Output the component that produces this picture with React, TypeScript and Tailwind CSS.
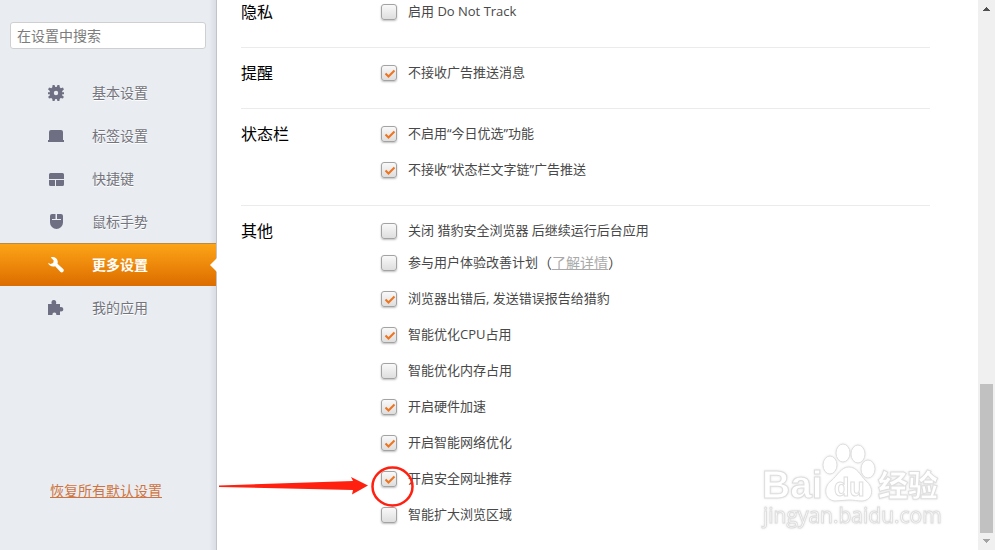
import React, { useState } from 'react';

interface OptionRow {
  id: string;
  label: string;
  checked: boolean;
  link?: string;
  tight?: boolean;
}

interface Section {
  title: string;
  rows: OptionRow[];
}

const sections: Section[] = [
  {
    title: '隐私',
    rows: [{ id: 'dnt', label: '启用 Do Not Track', checked: false }],
  },
  {
    title: '提醒',
    rows: [{ id: 'push', label: '不接收广告推送消息', checked: true }],
  },
  {
    title: '状态栏',
    rows: [
      { id: 'today', label: '不启用“今日优选”功能', checked: true },
      { id: 'textlink', label: '不接收“状态栏文字链”广告推送', checked: true },
    ],
  },
  {
    title: '其他',
    rows: [
      { id: 'background', label: '关闭 猎豹安全浏览器 后继续运行后台应用', checked: false, tight: true },
      { id: 'improve', label: '参与用户体验改善计划', checked: false, link: '了解详情' },
      { id: 'crash', label: '浏览器出错后, 发送错误报告给猎豹', checked: true },
      { id: 'cpu', label: '智能优化CPU占用', checked: true },
      { id: 'memory', label: '智能优化内存占用', checked: false },
      { id: 'hardware', label: '开启硬件加速', checked: true },
      { id: 'network', label: '开启智能网络优化', checked: true },
      { id: 'safeurl', label: '开启安全网址推荐', checked: true },
      { id: 'expand', label: '智能扩大浏览区域', checked: false },
    ],
  },
];

const icons: Record<string, React.ReactNode> = {
  gear: (
    <path
      fillRule="evenodd"
      d="M4.6 0h1.9l.8 2h1.4l.8-2h1.9l.4 2.3 1 .9L15 2.6l.9 1.8-1.7 1.5v1.3h1.8v2h-1.8v1.2l1.7 1.3-.9 1.9-2.3-.5-1 .9-.3 2H9.5l-.8-2H7.3l-.8 2H4.6l-.3-2-1-.9-2.3.5-.9-1.9 1.7-1.3V9.2H0v-2h1.8V5.9L.1 4.4 1 2.6l2.3.6 1-.9zM8 5.800a2.200 2.200 0 1 0 0 4.400 2.200 2.200 0 0 0 0-4.400z"
    />
  ),
  tab: <path d="M1 12V4a2 2 0 0 1 2-2h10a2 2 0 0 1 2 2v8h1v2H0v-2z" />,
  panels: <path d="M1 3.5A1.5 1.5 0 0 1 2.5 2h12A1.5 1.5 0 0 1 16 3.5V8H1zM1 9h6v6H2.5A1.5 1.5 0 0 1 1 13.5zM8 9h8v4.5a1.5 1.5 0 0 1-1.5 1.5H8z" />,
  mouse: <path d="M2 2a2 2 0 0 1 2-2h3.500v5H4v1h9V5H9V0h4a2 2 0 0 1 2 2v6.500a6.500 6.500 0 0 1-13 0z" />,
  wrench: <path d="M2.8.4C6-.7 9.4 1 9.7 4.500c.1.9 0 1.6-.2 2.3l5.700 5.100c1.800 1.700-.7 4.700-2.700 3.100L7.200 9.300C4.300 10.200 1 9.100 0 5.800l2.500 1.100 2.700-.8.500-2.600z" />,
  puzzle: <path d="M0 4h3.700C3 2.200 3.800 0 5.800 0s3 2.200 2.200 4h4v3.200c1.600-.7 3.300.2 3.300 2.100s-1.700 2.700-3.300 2V15H8.300c.3-1.600-.5-2.600-1.900-2.600s-2.200 1-1.900 2.600H0z" />,
};

const navItems = [
  { icon: 'gear', label: '基本设置' },
  { icon: 'tab', label: '标签设置' },
  { icon: 'panels', label: '快捷键' },
  { icon: 'mouse', label: '鼠标手势' },
  { icon: 'wrench', label: '更多设置' },
  { icon: 'puzzle', label: '我的应用' },
];

const Sidebar: React.FC = () => {
  const [active, setActive] = useState('更多设置');

  return (
    <aside className="w-[217px] shrink-0 flex flex-col border-r border-[#c0c3cb] bg-[#e9edf2] bg-[linear-gradient(to_left,#d9dde4,#e9edf2_7px)]">
      <div className="px-[10px] pt-[22px]">
        <input
          type="text"
          aria-label="在设置中搜索"
          placeholder="在设置中搜索"
          className="block w-full h-[27px] px-[6px] text-sm bg-white border border-[#cfcfcf] rounded-[3px] placeholder:text-[#7c7c7c] outline-none"
        />
      </div>

      <nav className="mt-[22px]">
        {navItems.map((item) => {
          const isActive = item.label === active;
          return (
            <button
              key={item.label}
              onClick={() => setActive(item.label)}
              className={
                isActive
                  ? 'relative w-full h-[43px] pl-12 flex items-center gap-7 text-sm font-bold text-white border-t border-[#c08a3c] bg-linear-to-b from-[#fda416] to-[#dc6c00]'
                  : 'relative w-full h-[43px] pl-12 flex items-center gap-7 text-sm text-[#74747d] [text-shadow:0_1px_0_#fff]'
              }
            >
              <svg viewBox="0 0 16 16" className={isActive ? 'w-4 h-4 fill-white' : 'w-4 h-4 fill-[#6e6f83]'}>
                {icons[item.icon]}
              </svg>
              <span>{item.label}</span>
              {isActive && (
                <svg viewBox="0 0 7 14" className="absolute -right-px top-3.5 w-[7px] h-3.5 fill-white">
                  <path d="M7 0v14L0 7z" />
                </svg>
              )}
            </button>
          );
        })}
      </nav>

      <div className="mt-auto pl-[50px] pb-12">
        <a href="#reset" className="text-sm text-[#cf7440] underline">
          恢复所有默认设置
        </a>
      </div>
    </aside>
  );
};

const Option: React.FC<{ row: OptionRow }> = ({ row }) => {
  const [checked, setChecked] = useState(row.checked);

  return (
    <div className={row.tight ? 'h-6 flex items-center -mb-1' : 'h-6 flex items-center'}>
      <span className="relative w-4 h-4 mr-[11px]">
        <input
          id={row.id}
          type="checkbox"
          checked={checked}
          onChange={() => setChecked(!checked)}
          className="peer block w-4 h-4 appearance-none rounded-[3px] border border-[#a3a3a3] bg-linear-to-b from-[#f9f9f9] to-[#dedede] shadow-[0_1px_2px_rgba(0,0,0,0.25)]"
        />
        <svg
          viewBox="0 0 16 16"
          className="absolute inset-0 w-4 h-4 hidden peer-checked:block pointer-events-none fill-none stroke-[#ee7420] stroke-2"
        >
          <path d="M4.5 8.5 7.5 11.5 13.5 5.5" />
        </svg>
      </span>
      <label htmlFor={row.id} className="text-[13px] text-[#484848]">
        {row.label}
      </label>
      {row.link && (
        <span className="text-sm text-[#484848]">
          （
          <a href="#improve" className="text-[#a9a9a9] underline">
            {row.link}
          </a>
          ）
        </span>
      )}
    </div>
  );
};

const Scrollbar: React.FC = () => (
  <div className="w-[17px] shrink-0 flex flex-col items-center bg-[#f0f0f0]">
    <svg viewBox="0 0 17 17" className="w-[17px] h-[17px] fill-[#505050]">
      <path d="M8 7h1v1h1v1h1v1h1v1H5v-1h1V9h1V8h1z" />
    </svg>
    <div className="flex-1 flex flex-col justify-end">
      <div className="w-[13px] h-[149px] bg-[#c1c1c1]" />
    </div>
    <svg viewBox="0 0 17 17" className="w-[17px] h-[17px] fill-[#a3a3a3]">
      <path d="M5 6h7v1h-1v1h-1v1H9v1H8V9H7V8H6V7H5z" />
    </svg>
  </div>
);

// red pointer drawn over the "safe url" option
const Annotation: React.FC = () => (
  <svg viewBox="0 0 196 44" className="absolute left-[219px] top-[464px] w-[196px] h-11 pointer-events-none">
    <path d="M0 21.5 134 17 132 13 149 21.500 133 30.500 134 26 0 23z" fill="#ff2010" />
    <ellipse cx="173.5" cy="22.500" rx="20" ry="19" fill="none" stroke="#ff2010" strokeWidth="2.500" />
  </svg>
);

const Watermark: React.FC = () => (
  <svg
    viewBox="0 0 184 90"
    className="absolute right-[51px] bottom-[19px] w-[184px] h-[90px] pointer-events-none fill-white stroke-[#dedede] stroke-1 [filter:drop-shadow(0_0_1px_#e4e4e4)]"
  >
    <text x="2" y="57" fontSize="39" fontWeight="700" fontFamily="Liberation Sans">
      Bai
    </text>
    <ellipse cx="70" cy="24" rx="7" ry="9" />
    <ellipse cx="83" cy="12" rx="7" ry="9" />
    <ellipse cx="98" cy="13" rx="7" ry="9" />
    <ellipse cx="108" cy="28" rx="7" ry="9" />
    <path d="M89 26c8 0 11 8 17 14 8 6 8 19-4 20-5 0-8-1-13-1s-9 1-14 1c-11-1-12-14-4-20 7-6 10-14 18-14z" />
    <text x="74" y="55" fontSize="25" fontWeight="700" fontFamily="Liberation Sans">
      du
    </text>
    <text x="118" y="55" fontSize="30" fontWeight="900" fontFamily="Noto Sans CJK SC">
      经验
    </text>
    <text x="3" y="82" fontSize="21" fontFamily="Open Sans">
      jingyan.baidu.com
    </text>
  </svg>
);

export default function App() {
  return (
    <div className="relative min-h-screen flex bg-white font-['Open_Sans','Noto_Sans_CJK_SC',sans-serif]">
      <Sidebar />

      <main className="flex-1 pl-6 pr-12">
        {sections.map((section) => (
          <section
            key={section.title}
            className="flex pt-[13px] pb-[23px] border-b border-[#ebebeb] first:pt-0 last:pb-0 last:border-b-0"
          >
            <h2 className="w-[140px] h-6 leading-6 text-base text-black">{section.title}</h2>
            <div className="flex-1 flex flex-col gap-3">
              {section.rows.map((row) => (
                <Option key={row.id} row={row} />
              ))}
            </div>
          </section>
        ))}
      </main>

      <Scrollbar />
      <Annotation />
      <Watermark />
    </div>
  );
}
